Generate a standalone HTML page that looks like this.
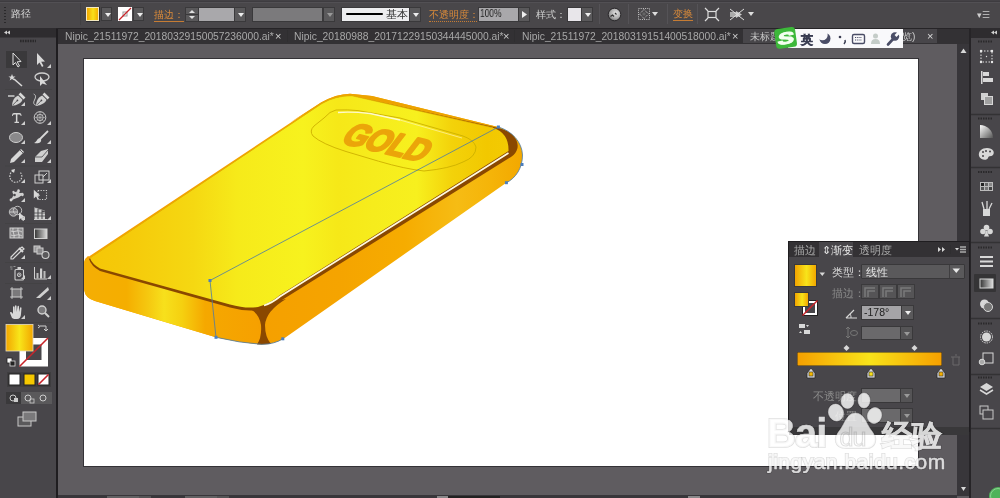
<!DOCTYPE html>
<html><head><meta charset="utf-8">
<style>
*{margin:0;padding:0;box-sizing:border-box}
html,body{width:1000px;height:498px;overflow:hidden;background:#5f5c60;font-family:"Liberation Sans",sans-serif;position:relative}
.a{position:absolute;will-change:transform}
.btn{background:#5a595b;border:1px solid #3a393b}
.btn::after{content:"";position:absolute;left:3px;top:5px;border-left:3px solid transparent;border-right:3px solid transparent;border-top:4px solid #eee}
.btn.dim::after{border-top-color:#999}
.sep{top:4px;width:1px;height:20px;background:#555357}
.tri{width:0;height:0;border-left:3px solid transparent;border-right:3px solid transparent;border-top:4px solid #ddd}
.tab{top:30px;font-size:10.3px;line-height:13px;color:#a8a8a8;white-space:nowrap}
.tx{top:30px;font-size:11px;line-height:13px;color:#d0d0d0}
</style></head><body>
<!-- control bar -->
<div class="a" style="left:0;top:0;width:1000px;height:29px;background:#262427"></div>
<div class="a" style="left:0;top:0;width:1000px;height:1px;background:#444246"></div><div class="a" style="left:0;top:1px;width:1000px;height:1px;background:#3e3c40"></div><div class="a" style="left:0;top:2px;width:1000px;height:1px;background:#525054"></div>
<div class="a" style="left:0;top:3px;width:1000px;height:25px;background:#49474a"></div>

<!-- control bar content -->
<div class="a" style="left:4px;top:7px;width:2px;height:16px;background:repeating-linear-gradient(#2a292b 0 1px,transparent 1px 3px)"></div>
<div class="a" style="left:11px;top:7px;font-size:10px;color:#d6d6d6;line-height:14px">路径</div>
<div class="a" style="left:80px;top:3px;width:1px;height:22px;background:#414042"></div>
<!-- fill swatch -->
<div class="a" style="left:86px;top:7px;width:14px;height:15px;background:#2f2e30"></div>
<div class="a" style="left:86px;top:7px;width:13px;height:14px;border:1px solid #f4e9c0;background:linear-gradient(90deg,#f2a800,#f8e01a 55%,#f2b000)"></div>
<div class="a btn" style="left:101px;top:7px;width:11px;height:14px"></div>
<!-- stroke swatch -->
<div class="a" style="left:118px;top:7px;width:14px;height:14px;background:#fff;overflow:hidden"><svg width="14" height="14" style="position:absolute;left:0;top:0"><rect x="5" y="5" width="4" height="4" fill="none" stroke="#9a9a9a" stroke-width="1"/><line x1="1" y1="13" x2="13" y2="1" stroke="#c8242a" stroke-width="1.3"/></svg></div>
<div class="a btn" style="left:133px;top:7px;width:11px;height:14px"></div>
<div class="a" style="left:154px;top:8px;font-size:10px;line-height:13px;color:#d98a3a;border-bottom:1px solid #c67c34">描边：</div>
<!-- spinner -->
<div class="a" style="left:185px;top:7px;width:14px;height:15px;background:#5a595b;border:1px solid #3a393b"><svg width="12" height="13" style="position:absolute;left:0;top:0"><path d="M3 5 L6 2 L9 5Z" fill="#e0e0e0"/><path d="M3 8 L6 11 L9 8Z" fill="#e0e0e0"/><line x1="0" y1="6.5" x2="12" y2="6.5" stroke="#3a393b"/></svg></div>
<div class="a" style="left:199px;top:7px;width:35px;height:15px;background:#a9a8ab;border-top:1px solid #3a393b;border-bottom:1px solid #3a393b"></div>
<div class="a btn" style="left:234px;top:7px;width:12px;height:15px"></div>
<!-- brush dropdown -->
<div class="a" style="left:252px;top:7px;width:71px;height:15px;background:#7b7a7c;border:1px solid #3a393b"></div>
<div class="a btn dim" style="left:323px;top:7px;width:12px;height:15px"></div>
<!-- stroke profile -->
<div class="a" style="left:341px;top:7px;width:69px;height:15px;background:#ededef;border:1px solid #3a393b"></div>
<div class="a" style="left:346px;top:13px;width:37px;height:2px;background:#000;border-radius:1px"></div>
<div class="a" style="left:386px;top:8px;font-size:11px;line-height:13px;color:#333">基本</div>
<div class="a btn" style="left:409px;top:7px;width:12px;height:15px"></div>
<div class="a" style="left:429px;top:8px;font-size:10px;line-height:13px;color:#d98a3a;border-bottom:1px dotted #c67c34">不透明度：</div>
<div class="a" style="left:478px;top:7px;width:41px;height:15px;background:#a9a8ab;border:1px solid #3a393b"></div>
<div class="a" style="left:480px;top:8px;font-size:10px;line-height:12px;color:#222;transform:scaleX(.84);transform-origin:0 0">100%</div>
<div class="a" style="left:518px;top:7px;width:12px;height:15px;background:#5a595b;border:1px solid #3a393b"><svg width="10" height="13" style="position:absolute;left:0;top:0"><path d="M3 3 L8 6.5 L3 10Z" fill="#eee"/></svg></div>
<div class="a" style="left:536px;top:8px;font-size:10px;line-height:13px;color:#d0d0d0">样式：</div>
<div class="a" style="left:567px;top:7px;width:15px;height:15px;background:#e8e6ea;border:1px solid #3a393b"></div>
<div class="a btn" style="left:581px;top:7px;width:12px;height:15px"></div>
<div class="a sep" style="left:599px"></div>
<svg class="a" style="left:607px;top:7px" width="15" height="15"><defs><radialGradient id="glb" cx=".6" cy=".4" r=".6"><stop offset="0" stop-color="#e8e8e8"/><stop offset=".7" stop-color="#a8a8a8"/><stop offset="1" stop-color="#7a7a7a"/></radialGradient></defs><circle cx="7.5" cy="7.5" r="6.3" fill="url(#glb)" stroke="#2a282b" stroke-width="1"/><path d="M3.5 9.5 L5.5 8 L7 9.5 M8 6 L9.5 7.5" stroke="#333" stroke-width="1.2" fill="none"/></svg>
<div class="a sep" style="left:628px"></div>
<svg class="a" style="left:637px;top:7px" width="14" height="14"><rect x="1.5" y="1.5" width="11" height="11" fill="none" stroke="#c8c8c8" stroke-dasharray="1 1.2"/><path d="M7 2.5 L11.5 7 L7 11.5 L2.5 7Z" fill="none" stroke="#d8d8d8" stroke-dasharray="1 1"/><rect x="5.5" y="5.5" width="3" height="3" fill="#666"/></svg>
<div class="a tri" style="left:652px;top:12px"></div>
<div class="a sep" style="left:667px"></div>
<div class="a" style="left:673px;top:8px;font-size:10px;line-height:12px;color:#d98a3a;border-bottom:1px solid #c67c34">变换</div>
<div class="a sep" style="left:697px"></div>
<svg class="a" style="left:704px;top:7px" width="16" height="15"><rect x="4" y="4.5" width="8" height="6" fill="none" stroke="#ddd" stroke-width="1.2"/><path d="M1 1 L4 4 M15 1 L12 4 M1 14 L4 11 M15 14 L12 11" stroke="#ddd" stroke-width="1.2"/></svg>
<svg class="a" style="left:728px;top:7px" width="18" height="15"><rect x="2" y="5" width="6" height="5" fill="#aaa"/><path d="M8 4 L14 7.5 L8 11Z" fill="#ccc"/><path d="M2 2 L16 13 M16 2 L2 13" stroke="#ddd" stroke-width="1"/></svg>
<div class="a tri" style="left:748px;top:12px"></div>
<div class="a" style="left:977px;top:11px;font-size:9px;color:#cfcfcf;line-height:9px">▾☰</div>
<!-- left toolbar -->
<div class="a" style="left:0;top:29px;width:58px;height:469px;background:#1f1d20"></div>
<div class="a" style="left:0;top:28px;width:56px;height:9px;background:#2e2c2f"></div>
<div class="a" style="left:0;top:37px;width:56px;height:1px;background:#3a383b"></div><div class="a" style="left:0;top:38px;width:56px;height:460px;background:#48464a"></div>
<svg class="a" style="left:0;top:0" width="58" height="498">
<path d="M7 30.5 L4 32.5 L7 34.5Z M10 30.5 L7 32.5 L10 34.5Z" fill="#cfcfcf"/>
<path d="M20 41 H36" stroke="#2a292b" stroke-width="2.6" stroke-dasharray="1.6 .9"/>
<rect x="6" y="51" width="21" height="17" fill="#3a393b"/>
<path d="M13 53 L13 65 L15.5 62.5 L18 67 L19.5 66 L17.2 61.8 L21 61.5Z" fill="#3a393b" stroke="#e0e0e0" stroke-width="1"/>
<path d="M37 53 L37 65 L39.5 62.5 L42 67 L43.5 66 L41.2 61.8 L45 61.5Z" fill="#d8d8d8"/>
<path d="M51 68 L47 68 L51 64Z" fill="#cfcfcf"/>
<path d="M12 74 l1 2.5 2.5 0 -2 1.6 .8 2.5 -2.3-1.5 -2.3 1.5 .8-2.5 -2-1.6 2.5 0z" fill="#d8d8d8"/><path d="M14 79 L22 86" stroke="#d8d8d8" stroke-width="1.6"/>
<ellipse cx="42" cy="77" rx="7" ry="4" fill="none" stroke="#d0d0d0" stroke-width="1.3"/><path d="M40 76 L40 86 L42.5 83.5 L47 85 Z" fill="#d8d8d8"/>
<path d="M5 89.5 H52" stroke="#434244" stroke-width="1"/>
<path d="M8 96 H14.5" stroke="#d8d8d8" stroke-width="1.4"/><g transform="translate(0 0)"><path d="M19.5,93.5 L24.5,98.5" stroke="#d8d8d8" stroke-width="2.6"/><path d="M18.2,95.5 L22.5,99.8 C21.5,103 17,105.5 12,105.8 C12.2,100.8 14.5,97 18.2,95.5Z" fill="#d0d0d0"/><path d="M12.5,105.3 L17,100.8" stroke="#48464a" stroke-width=".8"/><circle cx="17.4" cy="100.4" r=".9" fill="#48464a"/></g>
<path d="M25 106 L21 106 L25 102Z" fill="#cfcfcf"/>
<g transform="translate(24 0)"><path d="M19.5,93.5 L24.5,98.5" stroke="#d8d8d8" stroke-width="2.6"/><path d="M18.2,95.5 L22.5,99.8 C21.5,103 17,105.5 12,105.8 C12.2,100.8 14.5,97 18.2,95.5Z" fill="#d0d0d0"/><path d="M12.5,105.3 L17,100.8" stroke="#48464a" stroke-width=".8"/><circle cx="17.4" cy="100.4" r=".9" fill="#48464a"/></g><path d="M33.7,94 C36,95 36,97 34.5,100 C33,103 33.5,105.5 37.8,105.3" fill="none" stroke="#c8c8c8" stroke-width="1"/>
<path d="M12,116 Q12,113 14,113 H19.5 Q21.5,113 21.5,116 L20.8,116 Q20.5,114.6 19,114.6 H17.4 V121.8 H19 V123 H14.5 V121.8 H15.9 V114.6 H14.5 Q13,114.6 12.7,116Z" fill="#d4d4d4"/>
<path d="M25 125 L21 125 L25 121Z" fill="#cfcfcf"/>
<circle cx="40" cy="117.5" r="5.8" fill="none" stroke="#d0d0d0" stroke-width="1"/><circle cx="40" cy="117.5" r="3.2" fill="none" stroke="#c8c8c8" stroke-width=".9"/><path d="M34.5 117.5 H45.5 M40 112 V123 M36 113.5 L44 121.5 M44 113.5 L36 121.5" stroke="#b8b8b8" stroke-width=".6"/>
<path d="M51 125 L47 125 L51 121Z" fill="#cfcfcf"/>
<ellipse cx="16" cy="137.5" rx="6.5" ry="5" fill="#8a898b" stroke="#d0d0d0" stroke-width="1"/>
<path d="M25 144 L21 144 L25 140Z" fill="#cfcfcf"/>
<path d="M48 131 L40 139" stroke="#d8d8d8" stroke-width="1.8"/><path d="M40 138 C37 138 37 142 34 143 C38 144 42 143 41 139Z" fill="#d8d8d8"/>
<path d="M51 144 L47 144 L51 140Z" fill="#cfcfcf"/>
<path d="M21 149 L24 152 L14 162 L10 163 L11 159Z" fill="#d8d8d8"/><path d="M20 150 L23 153" stroke="#48464a" stroke-width=".8"/>
<path d="M25 163 L21 163 L25 159Z" fill="#cfcfcf"/>
<path d="M41 151 L48 149 L48 154 L42 162 L35 162 L35 157Z" fill="#d0d0d0"/><path d="M35 157 L42 157 L48 150" stroke="#48464a" stroke-width=".8" fill="none"/>
<path d="M51 163 L47 163 L51 159Z" fill="#cfcfcf"/>
<path d="M5 166 H52" stroke="#434244" stroke-width="1"/>
<path d="M13 171 A6 6 0 1 0 20 172" fill="none" stroke="#d0d0d0" stroke-width="1.2" stroke-dasharray="1.5 1.2"/><path d="M11 170 L15 169 L14 173Z" fill="#d8d8d8"/>
<path d="M25 183 L21 183 L25 179Z" fill="#cfcfcf"/>
<rect x="35" y="175" width="8" height="8" fill="none" stroke="#d0d0d0" stroke-width="1"/><rect x="39" y="171" width="10" height="9" fill="none" stroke="#d0d0d0" stroke-width="1"/><path d="M43 177 L47 173" stroke="#d0d0d0"/>
<path d="M51 183 L47 183 L51 179Z" fill="#cfcfcf"/>
<path d="M11,199 C13,197 14,195 12.5,192.5 C12,191 13.5,190 14.5,191.5 C15.5,193 17,191 18.5,190.5 C20,190 20,192 19,193 C21,193.5 22.5,192 23.5,193.5 C24.5,195 23,197 22,196 C21,195 19.5,197.5 17,198 C15,198.5 13.5,199 12,200.5Z" fill="#cfcfcf"/><circle cx="14.5" cy="195" r="1.3" fill="#48464a"/><circle cx="11" cy="200" r="1.4" fill="#d8d8d8"/><circle cx="18.5" cy="190.5" r="1.2" fill="#d8d8d8"/>
<path d="M25 202 L21 202 L25 198Z" fill="#cfcfcf"/>
<rect x="38" y="190.5" width="8.5" height="9" fill="none" stroke="#d0d0d0" stroke-width="1.1" stroke-dasharray="1.2 1.4"/><path d="M33.8,189.8 L33.8,198.5 L36,196.6 L37.8,199.8 L39,199.2 L37.4,196 L40.2,195.6Z" fill="#d8d8d8"/>
<circle cx="13.5" cy="212" r="4.2" fill="#7a787c" stroke="#c8c8c8" stroke-width=".9"/><circle cx="17.5" cy="210.5" r="4.2" fill="none" stroke="#c8c8c8" stroke-width=".9"/><path d="M10 212 H17" stroke="#c8c8c8" stroke-width="1"/><path d="M19,212.5 L19,220 L21,218.3 L23,221 L24,220.4 L22.5,217.8 L25,217.3Z" fill="#d8d8d8"/>
<path d="M25 220 L21 220 L25 216Z" fill="#cfcfcf"/>
<rect x="34.5" y="208" width="3" height="11" fill="#cfcfcf"/><rect x="38.5" y="209.5" width="3" height="9.5" fill="#cfcfcf"/><rect x="42.5" y="212" width="2.5" height="7" fill="#cfcfcf"/><path d="M34 213 H45 M34 216 H46" stroke="#48464a" stroke-width=".8"/><path d="M34 219.5 H47.5" stroke="#cfcfcf" stroke-width="1"/><path d="M34 207.5 L45 211" stroke="#aaa" stroke-width=".6"/>
<path d="M51 220 L47 220 L51 216Z" fill="#cfcfcf"/>
<path d="M5 223.5 H52" stroke="#434244" stroke-width="1"/>
<rect x="10" y="228" width="13" height="10" fill="#8a898b" stroke="#d0d0d0" stroke-width="1"/><path d="M11 231 C15 233 17 229 22 232 M13 228 C12 232 15 234 14 238 M18 228 C17 232 20 234 19 238 M11 235 C15 237 17 233 22 236" stroke="#e0e0e0" stroke-width=".8" fill="none"/>
<defs><linearGradient id="lg1" x1="0" x2="1"><stop offset="0" stop-color="#333"/><stop offset="1" stop-color="#ddd"/></linearGradient><linearGradient id="gg" x1="0" x2="1"><stop offset="0" stop-color="#f2a600"/><stop offset=".5" stop-color="#f8e51a"/><stop offset="1" stop-color="#f2a600"/></linearGradient></defs>
<rect x="34.5" y="229" width="12.5" height="9.5" fill="url(#lg1)" stroke="#d0d0d0" stroke-width="1"/>
<path d="M22 247 L24 249 L20 252 L13 259 L11 259 L11 257 L18 250Z" fill="none" stroke="#d8d8d8" stroke-width="1.2"/><path d="M19 248 L23 252" stroke="#d8d8d8" stroke-width="2"/>
<path d="M25 259 L21 259 L25 255Z" fill="#cfcfcf"/>
<rect x="34" y="246" width="6" height="6" fill="#9a999b" stroke="#d0d0d0"/><rect x="37" y="248" width="6" height="6" fill="#8a898b" stroke="#d0d0d0"/><circle cx="45.5" cy="255" r="3.5" fill="#5a595b" stroke="#d0d0d0" stroke-width="1.1"/>
<path d="M5 262.5 H52" stroke="#434244" stroke-width="1"/>
<rect x="15" y="269.5" width="8.5" height="10.5" rx="1" fill="none" stroke="#d0d0d0" stroke-width="1.1"/><rect x="17.5" y="267" width="3.5" height="2.5" fill="#d0d0d0"/><circle cx="19.2" cy="274.8" r="1.8" fill="none" stroke="#d0d0d0" stroke-width="1"/><circle cx="19.2" cy="274.8" r=".7" fill="#d0d0d0"/><path d="M10 267 h2.5 M13.5 266.5 h2 M10.5 269 h2" stroke="#aaa" stroke-width=".8"/>
<path d="M25 279 L21 279 L25 275Z" fill="#cfcfcf"/>
<path d="M34.5 267 V279 H47" fill="none" stroke="#d0d0d0" stroke-width="1"/><rect x="36.5" y="273" width="2" height="5.5" fill="#bbb"/><rect x="40" y="268.5" width="2.2" height="10" fill="#d0d0d0"/><rect x="43.5" y="271" width="2" height="7.5" fill="#bbb"/>
<path d="M51 279 L47 279 L51 275Z" fill="#cfcfcf"/>
<path d="M5 283.5 H52" stroke="#434244" stroke-width="1"/>
<rect x="12" y="289" width="9" height="8" fill="#7a797b" stroke="#d0d0d0" stroke-width="1"/><path d="M10 289 h2 M21 289 h2 M10 297 h2 M21 297 h2 M12 287 v2 M21 287 v2 M12 297 v2 M21 297 v2" stroke="#d0d0d0" stroke-width=".8"/>
<path d="M48 287 L36 298 L40 298 L49 290Z" fill="#d0d0d0"/>
<path d="M51 300 L47 300 L51 296Z" fill="#cfcfcf"/>
<path d="M12 318 L10 313 C10 312 11 311.5 12 312.5 L13 314 L13 307 C13 306 14.5 306 14.5 307 L14.5 312 L15 306 C15 305 16.5 305 16.5 306 L16.7 312 L17.5 306.5 C17.5 305.5 19 305.5 19 306.5 L19 312 L20 308 C20 307 21.5 307 21.5 308 L21 314 C21 317 19.5 319 17 319 L14 319Z" fill="#d8d8d8"/>
<path d="M25 319 L21 319 L25 315Z" fill="#cfcfcf"/>
<circle cx="42" cy="310" r="4" fill="#7a797b" stroke="#d0d0d0" stroke-width="1.4"/><path d="M45 313 L49 317" stroke="#d0d0d0" stroke-width="2"/>
<path d="M5 322.5 H52" stroke="#434244" stroke-width="1"/>
<rect x="19.5" y="338" width="28.5" height="28.5" fill="#fff"/><rect x="26" y="344.5" width="15.5" height="15.5" fill="#48464a"/><line x1="19.5" y1="366.5" x2="48" y2="338" stroke="#c8242a" stroke-width="1.6"/>
<rect x="6" y="324.5" width="27" height="26.5" fill="url(#gg)" stroke="#e6dcc0" stroke-width=".8"/>
<path d="M40 326 L46 326 L46 331 M44 329 L46 331 L48 329 M46 332" fill="none" stroke="#d0d0d0" stroke-width="1"/><path d="M38 325 L40 326.5 L38 328" fill="none" stroke="#d0d0d0"/>
<rect x="7" y="358" width="5" height="5" fill="#fff" stroke="#222" stroke-width=".8"/><rect x="10" y="361" width="5" height="5" fill="#222" stroke="#ddd" stroke-width=".8"/>
<rect x="7" y="372" width="44" height="15" fill="#3e3d3f"/><rect x="9" y="374" width="11" height="11" fill="#fff" stroke="#222" stroke-width="1"/><rect x="24" y="374" width="11" height="11" fill="#f5c800" stroke="#222" stroke-width="1"/><rect x="38" y="374" width="11" height="11" fill="#fff" stroke="#222" stroke-width="1"/><line x1="38.5" y1="384.5" x2="48.5" y2="374.5" stroke="#c8242a" stroke-width="1.6"/>
<rect x="6" y="392" width="46" height="12" fill="#5a595b"/><rect x="6" y="392" width="15" height="12" fill="#3a393b"/><circle cx="13" cy="398" r="3" fill="none" stroke="#ccc"/><rect x="14" y="398" width="4" height="4" fill="#ccc"/><circle cx="28" cy="398" r="3" fill="none" stroke="#ccc"/><rect x="30" y="399" width="4" height="4" fill="none" stroke="#ccc" stroke-width=".8"/><circle cx="43" cy="398" r="3" fill="none" stroke="#ccc"/>
<rect x="18" y="417" width="13" height="9" fill="#5a595b" stroke="#c8c8c8" stroke-width="1"/><rect x="23" y="412" width="13" height="9" fill="#7a797b" stroke="#c8c8c8" stroke-width="1"/>
</svg>
<!-- tab bar -->
<div class="a" style="left:58px;top:29px;width:912px;height:15px;background:#333134"></div>
<div class="a" style="left:743px;top:29px;width:194px;height:14px;background:#48464a"></div>

<!-- tabs -->
<div class="a tab" style="left:65px">Nipic_21511972_20180329150057236000.ai*</div><div class="a tx" style="left:275px">×</div>
<div class="a" style="left:287px;top:30px;width:1px;height:12px;background:#2f2e30"></div>
<div class="a tab" style="left:294px">Nipic_20180988_20171229150344445000.ai*</div><div class="a tx" style="left:503px">×</div>
<div class="a" style="left:514px;top:30px;width:1px;height:12px;background:#2f2e30"></div>
<div class="a tab" style="left:522px">Nipic_21511972_20180319151400518000.ai*</div><div class="a tx" style="left:732px">×</div>
<div class="a tab" style="left:750px;color:#c9c9c9">未标题-1</div><div class="a tab" style="left:902px;color:#c9c9c9">览)</div><div class="a tx" style="left:927px;color:#ddd">×</div>
<!-- artboard -->
<div class="a" style="left:83px;top:58px;width:836px;height:409px;background:#343236"></div>
<div class="a" style="left:84px;top:59px;width:834px;height:407px;background:#fff"></div>

<!-- gold bar -->
<svg class="a" style="left:0;top:0" width="1000" height="498">
<defs>
<linearGradient id="gTop" gradientUnits="userSpaceOnUse" x1="84" y1="0" x2="522" y2="0">
<stop offset="0" stop-color="#f5c606"/>
<stop offset=".1" stop-color="#f5ca0a"/>
<stop offset=".25" stop-color="#f5d812"/>
<stop offset=".35" stop-color="#f6ea1a"/>
<stop offset=".5" stop-color="#f7f21e"/>
<stop offset=".58" stop-color="#f6e818"/>
<stop offset=".66" stop-color="#f6ec1c"/>
<stop offset=".76" stop-color="#f7f01e"/>
<stop offset=".84" stop-color="#f3d20a"/>
<stop offset=".92" stop-color="#f2c800"/>
<stop offset="1" stop-color="#f3cc04"/>
</linearGradient>
<linearGradient id="gFront" gradientUnits="userSpaceOnUse" x1="84" y1="0" x2="262" y2="0">
<stop offset="0" stop-color="#f5ae04"/>
<stop offset=".24" stop-color="#f5ae00"/>
<stop offset=".36" stop-color="#f5c810"/>
<stop offset=".45" stop-color="#f7e01c"/>
<stop offset=".55" stop-color="#f5d010"/>
<stop offset=".68" stop-color="#f5a800"/>
<stop offset="1" stop-color="#f6a000"/>
</linearGradient>
<linearGradient id="gSide" gradientUnits="userSpaceOnUse" x1="262" y1="0" x2="522" y2="0">
<stop offset="0" stop-color="#f5a000"/>
<stop offset=".3" stop-color="#f5a400"/>
<stop offset=".55" stop-color="#f6ac00"/>
<stop offset=".75" stop-color="#f6bc14"/>
<stop offset=".88" stop-color="#f5b408"/>
<stop offset="1" stop-color="#f3a800"/>
</linearGradient>
</defs>
<!-- silhouette / side -->
<path d="M89,256.5 L321,102.5 Q336,94 350,93.7 L372,96 L498,127 C512,131 522,142 522.5,155 C522.5,168 516,178 506,183 L284,338.4 Q275,344 262,344.4 Q240,343 215,337 L95,301 Q85,298 84.2,290 L84.2,262 Q85,258 88,256Z" fill="url(#gSide)"/>
<!-- front face -->
<path d="M84.2,262 Q85,258 90,259 L254,306 L262,344.4 Q240,343 215,337 L95,301 Q85,298 84.2,290Z" fill="url(#gFront)"/>
<!-- back rim -->
<path d="M290,122.5 L321,102.5 Q336,94 350,93.7 L372,96 L498,127 L494,128 L352,96.4 Q337,96 322,104 Z" fill="#eda200"/>
<!-- brown line region -->
<path d="M89,259 L322,103.5 Q336,95.5 352,95.8 L495,127.3 C510,130 519,138 517.5,148 Q516,154 511,157 L282,300 Q272,308 258,310 Q244,311.5 230,307.5 L100,271 Q91,266 89,259Z" fill="#8a4800"/>
<!-- corner wedge -->
<path d="M246,308 Q259,311 261,325 Q262,337 257,344.5 L271,344 Q265,337 265,325 Q266,311 286,299Z" fill="#8a4800"/>
<!-- top face -->
<path d="M90,258 L322,103.5 Q336,95.5 352,95.8 L493,127.8 Q509,133 508.5,151 L280,295 Q270,303.5 258,307 Q246,309 230,304.5 L100,268.5 Q92,264 90,258Z" fill="url(#gTop)"/>
<!-- highlight -->
<path d="M508.5,153 L280,296.5 Q272,303 264,305.5" fill="none" stroke="#fffbe0" stroke-width="1.7"/>
<path d="M90,258 L322,103.5 Q336,95.5 352,95.8 L493,127.8" fill="none" stroke="#e6b400" stroke-width=".7"/>
<!-- label -->
<path d="M336,110 Q348,109.5 358,110.6 L400,118 L463,136 Q474,140 476,147 Q476,157 463,162 Q450,168.5 424,171 Q405,169 378.5,161.2 L346,151.5 Q322,144 313,136 Q309,131 314,126 L324,118 Q330,111 336,110Z" fill="none" stroke="#cdb000" stroke-width=".9"/>
<path d="M338,112.5 Q352,111.5 370,113.5 L400,120" fill="none" stroke="#fffbe0" stroke-width="1.3" opacity=".9"/>
<path d="M400,120 L462,138" fill="none" stroke="#fff6c0" stroke-width=".8" opacity=".8"/>
<text transform="translate(339.5,142.5) rotate(13.5) skewX(-24) scale(.9,1)" font-family="Liberation Sans" font-weight="bold" font-size="33" fill="#eba50a" stroke="#eba50a" stroke-width="2.2" stroke-linejoin="round" letter-spacing="-.5">GOLD</text>
<!-- selection path -->
<g stroke="#4a7aa8" stroke-width=".8" fill="none">
<path d="M216,337.3 L210,280.5 L498.4,127"/>
<path d="M498.4,127 C512,131 522,142 522.5,155 C522.5,168 516,178 506,183"/>
<path d="M216,337.3 Q240,343 262,344.4 Q275,344 282.8,338.8"/>
</g>
<g fill="#4a7ec0">
<rect x="208.5" y="279" width="3" height="3"/><rect x="214.5" y="335.8" width="3" height="3"/><rect x="281.3" y="337.3" width="3" height="3"/><rect x="496.9" y="125.5" width="3" height="3"/><rect x="520.5" y="163" width="3" height="3"/><rect x="504.9" y="181.2" width="3" height="3"/>
</g>
</svg>
<!-- scrollbar -->
<div class="a" style="left:957px;top:44px;width:13px;height:452px;background:#38363a"></div>
<!-- right dock -->
<div class="a" style="left:969px;top:29px;width:31px;height:469px;background:#262427"></div>
<div class="a" style="left:971px;top:28px;width:29px;height:10px;background:#2e2c2f"></div>
<div class="a" style="left:971px;top:38px;width:29px;height:460px;background:#48464a"></div>
<svg class="a" style="left:957px;top:29px" width="43" height="469">
<g transform="translate(-957 -29)"><path d="M960.5 53 L963.5 48.5 L966.5 53Z" fill="#d8d8d8"/><path d="M961 487 L963.5 491 L966 487Z" fill="#d8d8d8"/></g>
<g transform="translate(-957 -29)"><path d="M994 30.5 L991 32.5 L994 34.5Z M997 30.5 L994 32.5 L997 34.5Z" fill="#cfcfcf"/></g>
<path d="M21 12.5 H36" stroke="#2a292b" stroke-width="2" stroke-dasharray="1.5 1"/>
<path d="M21 89.5 H36" stroke="#2a292b" stroke-width="2" stroke-dasharray="1.5 1"/>
<path d="M21 143.0 H36" stroke="#2a292b" stroke-width="2" stroke-dasharray="1.5 1"/>
<path d="M21 218.5 H36" stroke="#2a292b" stroke-width="2" stroke-dasharray="1.5 1"/>
<path d="M21 294.5 H36" stroke="#2a292b" stroke-width="2" stroke-dasharray="1.5 1"/>
<path d="M21 348.5 H36" stroke="#2a292b" stroke-width="2" stroke-dasharray="1.5 1"/>
<path d="M14 85.5 H43" stroke="#333234" stroke-width="1.5"/>
<path d="M14 138.5 H43" stroke="#333234" stroke-width="1.5"/>
<path d="M14 213.5 H43" stroke="#333234" stroke-width="1.5"/>
<path d="M14 289.5 H43" stroke="#333234" stroke-width="1.5"/>
<path d="M14 345.5 H43" stroke="#333234" stroke-width="1.5"/>
<path d="M14 399.5 H43" stroke="#333234" stroke-width="1.5"/>
<g transform="translate(-957 -29)"><rect x="981" y="51" width="11" height="11" fill="none" stroke="#e0e0e0" stroke-width="1" stroke-dasharray="1.5 1.5"/><circle cx="981" cy="51" r="1.2" fill="#e8e8e8"/><circle cx="992" cy="51" r="1.2" fill="#e8e8e8"/><circle cx="981" cy="62" r="1.2" fill="#e8e8e8"/><circle cx="992" cy="62" r="1.2" fill="#e8e8e8"/><circle cx="986.5" cy="56.5" r=".7" fill="#ddd"/></g>
<g transform="translate(-957 -29)"><rect x="981" y="71" width="1.5" height="13" fill="#d8d8d8"/><rect x="983" y="72" width="6" height="4" fill="#d8d8d8"/><rect x="983" y="78" width="10" height="4" fill="#d8d8d8"/></g>
<g transform="translate(-957 -29)"><rect x="981" y="93" width="7" height="7" fill="#d0d0d0"/><rect x="984.5" y="96.5" width="8" height="8" fill="#a0a0a0" stroke="#d8d8d8" stroke-width="1"/></g>
<g transform="translate(-957 -29)"><defs><linearGradient id="cg" x1="0" y1="0" x2="1" y2="1"><stop offset="0" stop-color="#fff"/><stop offset="1" stop-color="#555"/></linearGradient></defs><path d="M980 125 A13 13 0 0 1 993 138 L980 138Z" fill="url(#cg)"/></g>
<g transform="translate(-957 -29)"><path d="M987 148 C993 148 995 152 993 155 C991 157 989 155 988 158 C987 161 980 160 979 156 C978 151 982 148 987 148Z" fill="#d8d8d8"/><circle cx="983" cy="152" r="1" fill="#48464a"/><circle cx="986" cy="151" r="1" fill="#48464a"/><circle cx="990" cy="151.5" r="1" fill="#48464a"/><circle cx="983" cy="156" r="1" fill="#48464a"/></g>
<g transform="translate(-957 -29)"><rect x="980" y="182" width="13" height="9" fill="#bbb"/><rect x="981" y="183" width="3" height="3" fill="#222"/><rect x="985" y="183" width="3" height="3" fill="#666"/><rect x="989" y="183" width="3" height="3" fill="#888"/><rect x="981" y="187" width="3" height="3" fill="#555"/><rect x="985" y="187" width="3" height="3" fill="#777"/><rect x="989" y="187" width="3" height="3" fill="#444"/></g>
<g transform="translate(-957 -29)"><rect x="983" y="209" width="7" height="7" fill="#d8d8d8"/><path d="M984 209 L982 202 M987 209 L987 201 M989 209 L992 203" stroke="#d8d8d8" stroke-width="1.3"/></g>
<g transform="translate(-957 -29)"><circle cx="986.5" cy="227.5" r="2.8" fill="#d8d8d8"/><circle cx="983" cy="231.5" r="2.8" fill="#d8d8d8"/><circle cx="990" cy="231.5" r="2.8" fill="#d8d8d8"/><path d="M986.5 230 L984 236.5 H989Z" fill="#d8d8d8"/></g>
<g transform="translate(-957 -29)"><rect x="980" y="256" width="13" height="2" fill="#d8d8d8"/><rect x="980" y="260.5" width="13" height="2" fill="#d8d8d8"/><rect x="980" y="265" width="13" height="2" fill="#d8d8d8"/></g>
<g transform="translate(-957 -29)"><rect x="974" y="274" width="22" height="18" rx="1" fill="#353436"/><rect x="980" y="279" width="13" height="9" fill="url(#lg1)" stroke="#d8d8d8" stroke-width="1"/></g>
<g transform="translate(-957 -29)"><circle cx="984.5" cy="304" r="4.5" fill="#d8d8d8"/><circle cx="988" cy="307" r="4.5" fill="#777" stroke="#d8d8d8" stroke-width="1"/></g>
<g transform="translate(-957 -29)"><circle cx="986.5" cy="337" r="6" fill="none" stroke="#d8d8d8" stroke-width="1" stroke-dasharray="1.5 1"/><circle cx="986.5" cy="337" r="4.5" fill="#d8d8d8"/></g>
<g transform="translate(-957 -29)"><rect x="983" y="353" width="10" height="10" fill="none" stroke="#d8d8d8" stroke-width="1"/><circle cx="982" cy="362" r="2.8" fill="#aaa" stroke="#d8d8d8"/></g>
<g transform="translate(-957 -29)"><path d="M986.5 383 L993 387 L986.5 391 L980 387Z" fill="#d8d8d8"/><path d="M980 390 L986.5 394 L993 390" fill="none" stroke="#d8d8d8" stroke-width="1.5"/></g>
<g transform="translate(-957 -29)"><rect x="980" y="406" width="8" height="8" fill="none" stroke="#c8c8c8" stroke-width="1"/><rect x="983" y="410" width="10" height="9" fill="#48464a" stroke="#c8c8c8" stroke-width="1"/></g>
<g transform="translate(-957 -29)"><circle cx="998" cy="496" r="9" fill="#4fb35a"/><circle cx="998" cy="496" r="7.5" fill="none" stroke="#9ad89e" stroke-width=".8"/></g>
</svg>
<!-- status bar -->
<div class="a" style="left:58px;top:495px;width:899px;height:3px;background:#38363a"></div>

<!-- sogou IME -->
<div class="a" style="left:788px;top:29px;width:115px;height:19px;background:#f9f9fb"></div>
<svg class="a" style="left:772px;top:25px" width="135" height="26">
<g transform="rotate(-8 13 12)"><rect x="3" y="3" width="21" height="20" rx="3.5" fill="#3db83a"/></g>
<g transform="translate(14 12.5) rotate(-8) skewX(-12) scale(1.45 .95)"><text x="0" y="6.5" font-family="Liberation Sans" font-weight="bold" font-size="17" fill="#f4fff0" stroke="#f4fff0" stroke-width="1.1" text-anchor="middle">S</text></g>
<text x="29" y="18.5" font-size="11.5" font-weight="bold" fill="#3a3d52" stroke="#3a3d52" stroke-width=".5" font-family="Liberation Sans">英</text>
<circle cx="53" cy="13.5" r="5.5" fill="#4a4d66"/><circle cx="50.5" cy="10" r="5.2" fill="#f9f9fb"/>
<circle cx="68" cy="12" r="1.3" fill="#3a3d52"/><path d="M73 15 Q74 17 72 19" stroke="#3a3d52" stroke-width="1.6" fill="none"/>
<rect x="80.5" y="9.5" width="12" height="9" rx="1.5" fill="none" stroke="#4a4d66" stroke-width="1.4"/><path d="M83 12.5 H90 M83 15 H90" stroke="#4a4d66" stroke-width="1" stroke-dasharray="1 .8"/>
<circle cx="103.5" cy="11" r="2.5" fill="#c4ccc8"/><path d="M99 19 Q99 14 103.5 14 Q108 14 108 19Z" fill="#c4ccc8"/>
<path d="M116 19.5 L122 13" stroke="#4a4d66" stroke-width="2.6" stroke-linecap="round"/><circle cx="123" cy="11.5" r="4.2" fill="#4a4d66"/><path d="M123.5 11 L128 6.5" stroke="#f9f9fb" stroke-width="2.6"/>
</svg>
<div class="a" style="left:107px;top:496px;width:32px;height:2px;background:#626163"></div><div class="a" style="left:139px;top:496px;width:12px;height:2px;background:#555456"></div>
<div class="a" style="left:185px;top:496px;width:32px;height:2px;background:#626163"></div><div class="a" style="left:217px;top:496px;width:12px;height:2px;background:#555456"></div>
<div class="a" style="left:437px;top:496px;width:11px;height:2px;background:#8a898b"></div><div class="a" style="left:448px;top:496px;width:52px;height:2px;background:#222"></div><div class="a" style="left:688px;top:496px;width:12px;height:2px;background:#8a898b"></div>
<!-- gradient panel -->
<div class="a" style="left:788px;top:241px;width:182px;height:191px;background:#1f1d20"></div>
<div class="a" style="left:789px;top:242px;width:180px;height:15px;background:#333134"></div>
<div class="a" style="left:789px;top:257px;width:180px;height:170px;background:#48464a"></div>

<!-- gradient panel content -->
<div class="a" style="left:819px;top:242px;width:34px;height:15px;background:#48464a"></div>
<div class="a" style="left:794px;top:244px;font-size:10.5px;line-height:12px;color:#a9a9a9">描边</div>
<div class="a" style="left:822px;top:244px;font-size:10.5px;line-height:12px;color:#e6e6e6">⇕渐变</div>
<div class="a" style="left:859px;top:244px;font-size:10.5px;line-height:12px;color:#a9a9a9">透明度</div>
<svg class="a" style="left:930px;top:242px" width="40" height="15"><path d="M8 5 L11 7.5 L8 10Z M12 5 L15 7.5 L12 10Z" fill="#d8d8d8"/><rect x="20" y="3" width="1" height="9" fill="#2f2e30"/><path d="M25 6 L29 6 L27 8.5Z" fill="#d8d8d8"/><path d="M30 5 H36 M30 7.5 H36 M30 10 H36" stroke="#aaa" stroke-width="1.5"/></svg>
<div class="a" style="left:794px;top:264px;width:23px;height:23px;background:linear-gradient(90deg,#f2a300,#f8e41a 55%,#f2a800);border:1px solid #3a393b"></div>
<svg class="a" style="left:819px;top:272px" width="7" height="5"><path d="M0.5 0.5 L6 0.5 L3.3 4Z" fill="#d8d8d8"/></svg>
<div class="a" style="left:802px;top:300px;width:16px;height:16px;background:#fff;border:1px solid #222"></div>
<svg class="a" style="left:802px;top:300px" width="16" height="16"><rect x="3" y="3" width="10" height="10" fill="#48464a"/><line x1="0.5" y1="15.5" x2="15.5" y2="0.5" stroke="#c8242a" stroke-width="1.5"/></svg>
<div class="a" style="left:794px;top:292px;width:15px;height:15px;background:linear-gradient(90deg,#f2a300,#f8e41a 55%,#f2a800);border:1px solid #3a393b"></div>
<svg class="a" style="left:798px;top:323px" width="14" height="13"><rect x="1" y="1" width="6" height="4" fill="#d8d8d8"/><path d="M8 2 L11 2 L9.5 4Z" fill="#d8d8d8"/><rect x="6" y="7" width="6" height="4" fill="#d8d8d8"/><path d="M1 10 L4 10 L2.5 8Z" fill="#d8d8d8"/></svg>
<div class="a" style="left:832px;top:266px;font-size:10.5px;line-height:12px;color:#dcdcdc">类型：</div>
<div class="a" style="left:861px;top:264px;width:104px;height:15px;background:#5a595b;border:1px solid #39383a;border-radius:1px"></div>
<div class="a" style="left:866px;top:266px;font-size:10.5px;line-height:12px;color:#e6e6e6">线性</div>
<div class="a" style="left:949px;top:265px;width:1px;height:13px;background:#3f3e40"></div>
<svg class="a" style="left:952px;top:268px" width="9" height="6"><path d="M0.5 0.5 L8 0.5 L4.3 5Z" fill="#e8e8e8"/></svg>
<div class="a" style="left:832px;top:287px;font-size:10.5px;line-height:12px;color:#8a8a8a">描边：</div>
<svg class="a" style="left:861px;top:284px" width="56" height="16"><g fill="#555456" stroke="#3b3a3c"><rect x=".5" y=".5" width="17" height="14"/><rect x="18.5" y=".5" width="17" height="14"/><rect x="36.5" y=".5" width="17" height="14"/></g><g fill="none" stroke="#7a797b" stroke-width="1.5"><path d="M4 13 V4 H14 M7 13 V7 H14"/><path d="M22 13 V4 H32 M25 13 V7 H32"/><path d="M40 13 V4 H50 M43 13 V7 H50"/></g></svg>
<svg class="a" style="left:845px;top:309px" width="13" height="10"><path d="M1 9 H12 M1 9 L9 1" stroke="#d8d8d8" stroke-width="1.1" fill="none"/><path d="M6 9 A5 5 0 0 0 5 5" stroke="#d8d8d8" fill="none"/></svg>
<div class="a" style="left:861px;top:305px;width:41px;height:15px;background:#a5a4a7;border:1px solid #39383a"></div>
<div class="a" style="left:864px;top:306px;font-size:10.5px;line-height:13px;color:#222">-178°</div>
<div class="a btn" style="left:901px;top:305px;width:13px;height:15px"></div>
<svg class="a" style="left:845px;top:326px" width="13" height="13"><path d="M3 1 V12 M1 3 L3 1 L5 3 M1 10 L3 12 L5 10" stroke="#777" fill="none"/><ellipse cx="9" cy="7" rx="3.5" ry="2.5" fill="none" stroke="#777"/></svg>
<div class="a" style="left:861px;top:326px;width:40px;height:14px;background:#6a696b;border:1px solid #39383a"></div>
<div class="a btn dim" style="left:900px;top:326px;width:13px;height:14px;background:#555456"></div>
<svg class="a" style="left:790px;top:343px" width="170" height="40">
<defs><linearGradient id="gs" x1="0" x2="1"><stop offset="0" stop-color="#f5a000"/><stop offset=".5" stop-color="#f8e31a"/><stop offset="1" stop-color="#f5a000"/></linearGradient></defs>
<path d="M56.5 2 L59.5 5 L56.5 8 L53.5 5Z" fill="#d8d8d8"/><path d="M124.5 2 L127.5 5 L124.5 8 L121.5 5Z" fill="#d8d8d8"/>
<rect x="7" y="9" width="145" height="14" fill="#2a292b"/>
<rect x="7.5" y="9.5" width="144" height="13" fill="url(#gs)"/>
<g stroke="#2a292b" stroke-width=".8"><path d="M17 30 L21 25 L25 30 V35 H17Z" fill="#d8d8d8"/><path d="M77 30 L81 25 L85 30 V35 H77Z" fill="#d8d8d8"/><path d="M147 30 L151 25 L155 30 V35 H147Z" fill="#d8d8d8"/></g>
<rect x="19" y="29" width="4" height="4" fill="#f5b800" stroke="#333" stroke-width=".6"/><rect x="79" y="29" width="4" height="4" fill="#f8e01a" stroke="#333" stroke-width=".6"/><rect x="149" y="29" width="4" height="4" fill="#f5b000" stroke="#333" stroke-width=".6"/>
<path d="M161 14 H171 M163 14 V22 H169 V14 M165 12 H167" stroke="#6a696b" fill="none" stroke-width="1"/>
</svg>
<div class="a" style="left:813px;top:390px;font-size:10.5px;line-height:12px;color:#8a8a8a">不透明度：</div>
<div class="a" style="left:861px;top:388px;width:40px;height:15px;background:#6a696b;border:1px solid #39383a"></div>
<div class="a btn dim" style="left:900px;top:388px;width:13px;height:15px;background:#555456"></div>
<div class="a" style="left:835px;top:410px;font-size:10.5px;line-height:12px;color:#8a8a8a">位置：</div>
<div class="a" style="left:861px;top:408px;width:40px;height:15px;background:#6a696b;border:1px solid #39383a"></div>
<div class="a btn dim" style="left:900px;top:408px;width:13px;height:15px;background:#555456"></div>
<div class="a" style="left:789px;top:427px;width:180px;height:8px;background:#39383a"></div>

<!-- baidu watermark -->
<svg class="a" style="left:0;top:0" width="1000" height="498">
<defs>
<g id="wmg">
<text x="767" y="447" font-family="Liberation Sans" font-weight="bold" font-size="40" letter-spacing="-1">Bai</text>
<ellipse cx="836" cy="412.5" rx="7.5" ry="8.5" transform="rotate(-20 836 412.5)"/>
<ellipse cx="847.5" cy="401" rx="6.5" ry="7.5"/>
<ellipse cx="864" cy="400.5" rx="6" ry="7.5"/>
<ellipse cx="874.5" cy="415.5" rx="7" ry="8" transform="rotate(20 874.5 415.5)"/>
<path d="M855.5,413 C847,413 845,423 840,430 C833,438 835,448 846,448 L866,448 C876,448 878,438 871,430 C866,423 864,413 855.5,413Z"/>
<text x="882" y="446" font-family="Liberation Sans" font-weight="bold" font-size="30">经验</text>
<text x="768" y="468.5" font-family="Liberation Sans" font-size="21" letter-spacing=".5">jingyan.baidu.com</text>
</g>
</defs>
<use href="#wmg" fill="none" stroke="#000" stroke-opacity=".13" stroke-width="2.2"/>
<g opacity=".8"><use href="#wmg" fill="#fff" stroke="#fff" stroke-width=".5"/></g>
<text x="839.5" y="446" font-family="Liberation Sans" font-size="25" fill="none" stroke="#000" stroke-opacity=".13" stroke-width="1.2" letter-spacing="-1">du</text>
</svg>
</body></html>
